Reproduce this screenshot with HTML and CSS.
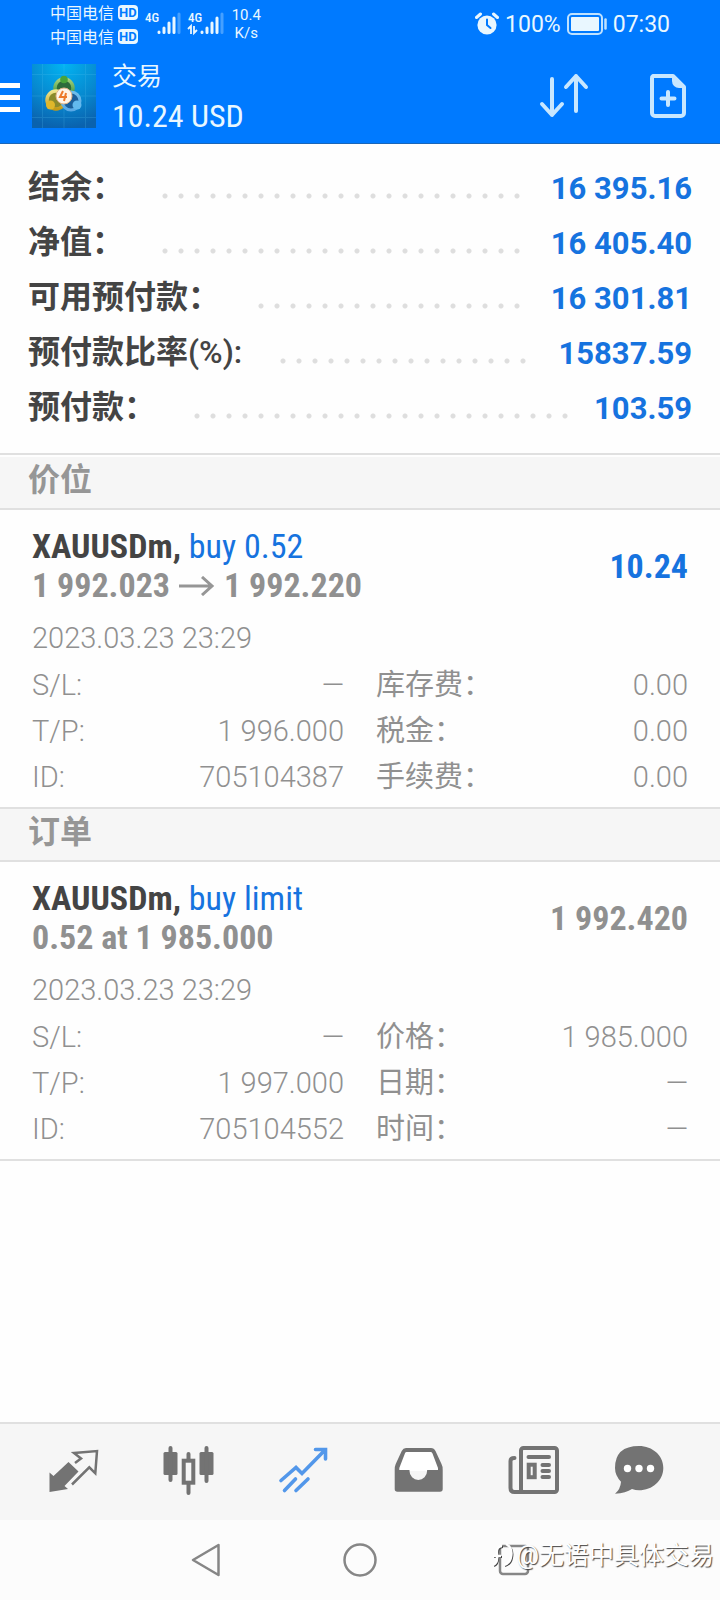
FILE: index.html
```html
<!DOCTYPE html>
<html lang="zh-CN">
<head>
<meta charset="utf-8">
<meta name="viewport" content="width=device-width, initial-scale=1">
<title>交易</title>
<link rel="stylesheet" href="styles.css">
</head>
<body>
<div class="app">
  <header class="header">
    <div class="status">
      <div class="carriers">
        <div class="carrier">中国电信 <span class="hd">HD</span></div>
        <div class="carrier">中国电信 <span class="hd">HD</span></div>
      </div>
      <svg class="signals" viewBox="0 0 80 28" aria-hidden="true">
        <g class="signal-text"><text x="0" y="12">4G</text><text x="43" y="12">4G</text></g>
        <g stroke="#e9f7ff" stroke-width="3" stroke-linecap="round">
          <path d="M14 22.500V22M19 22.500V18M24 22.500V13M29 22.500V8M57 22.500V22M62 22.500V18M67 22.500V13M72 22.500V8"/>
          <path d="M34 22.500V4M77 22.500V4" opacity=".3"/>
        </g>
        <path d="M46 24V16l-3 3M49 16v7l3-3" fill="none" stroke="#e9f7ff" stroke-width="1.800"/>
      </svg>
      <div class="speed"><span>10.4</span><span>K/s</span></div>
      <div class="status-right">
        <svg width="24" height="24" viewBox="0 0 24 24" aria-hidden="true">
          <circle cx="12" cy="13" r="9.600" fill="#e9f7ff"/>
          <path d="M1.500 5.500L5.500 2M22.500 5.500L18.500 2" stroke="#e9f7ff" stroke-width="3" stroke-linecap="round"/>
          <path d="M12 7.500V13l3.500 3" fill="none" stroke="#007aff" stroke-width="2" stroke-linecap="round"/>
        </svg>
        <span>100%</span>
        <svg width="40" height="22" viewBox="0 0 40 22" aria-hidden="true">
          <rect x="1" y="1" width="34" height="20" rx="4" fill="none" stroke="#bfe2ff" stroke-width="2"/>
          <rect x="4" y="4" width="28" height="14" rx="1" fill="#e9f7ff"/>
          <path d="M38.500 6.500v9" stroke="#bfe2ff" stroke-width="2.500" stroke-linecap="round"/>
        </svg>
        <span>07:30</span>
      </div>
    </div>
    <div class="toolbar">
      <button class="icon-btn" aria-label="菜单">
        <svg width="20" height="64" viewBox="0 0 20 64"><path d="M0 21.500h20M0 33.500h20M0 45.500h20" stroke="#fff" stroke-width="5"/></svg>
      </button>
      <svg class="logo" viewBox="0 0 64 64" aria-hidden="true">
        <defs>
          <radialGradient id="bg" cx=".5" cy="0" r="1"><stop offset="0" stop-color="#02b4f2"/><stop offset=".6" stop-color="#0787ce"/><stop offset="1" stop-color="#0a62ae"/></radialGradient>
          <linearGradient id="gr" x1="0" y1="0" x2="0" y2="1"><stop offset="0" stop-color="#a5d07a"/><stop offset="1" stop-color="#2c8c3c"/></linearGradient>
          <linearGradient id="ye" x1="0" y1="0" x2="0" y2="1"><stop offset="0" stop-color="#efe58e"/><stop offset="1" stop-color="#c39a17"/></linearGradient>
          <linearGradient id="bl" x1="0" y1="0" x2="0" y2="1"><stop offset="0" stop-color="#6fbdea"/><stop offset="1" stop-color="#5aa9e6"/></linearGradient>
        </defs>
        <rect width="64" height="64" fill="url(#bg)"/>
        <path d="M10.500 0v64M53.500 0v64M0 10.500h64M0 53.500h64M32 0v64M0 32h64" stroke="#5cc6f2" stroke-width="1" opacity=".2"/>
        <circle cx="32" cy="24" r="9" fill="#2d6c3c" stroke="url(#gr)" stroke-width="3.500"/>
        <circle cx="24" cy="36" r="9" fill="#8a8a2c" stroke="url(#ye)" stroke-width="3.500"/>
        <circle cx="39" cy="37" r="9" fill="#1b5f9c" stroke="url(#bl)" stroke-width="3"/>
        <circle cx="32" cy="15.500" r="3.800" fill="#47a33b"/>
        <circle cx="18.500" cy="41" r="4.500" fill="#dfb72a"/>
        <circle cx="45" cy="41" r="4.500" fill="#63b9ee"/>
        <circle cx="32" cy="32" r="8" fill="#fff4e8" stroke="#e2b58a" stroke-width="1"/>
        <path d="M31 27l-3 6h7M34 29l-2 8" fill="none" stroke="#ed7a2b" stroke-width="2"/>
      </svg>
      <div class="titles">
        <h1 class="title">交易</h1>
        <div class="profit">10.24 USD</div>
      </div>
      <button class="icon-btn sort" aria-label="排序">
        <svg width="52" height="48" viewBox="0 0 52 48" fill="none" stroke="#c8e7ff" stroke-width="4" stroke-linecap="round" stroke-linejoin="round"><path d="M14 7v36M4 32l10 11 10-11M38 39V4M28 15L38 4l10 11"/></svg>
      </button>
      <button class="icon-btn" aria-label="新订单">
        <svg width="40" height="48" viewBox="0 0 40 48"><path d="M5 4h20l11 11v26a3 3 0 0 1-3 3H7a3 3 0 0 1-3-3V6a2 2 0 0 1 1-2z" fill="none" stroke="#c8e7ff" stroke-width="4" stroke-linejoin="round"/><path d="M24 4v5a7 7 0 0 0 7 7h5z" fill="#c8e7ff"/><path d="M20 20v13M13.500 26.500h13" stroke="#c8e7ff" stroke-width="4" stroke-linecap="round"/></svg>
      </button>
    </div>
  </header>

  <main>
    <dl class="summary">
      <div class="sum-row"><dt>结余：</dt><dd>16 395.16</dd></div>
      <div class="sum-row"><dt>净值：</dt><dd>16 405.40</dd></div>
      <div class="sum-row"><dt>可用预付款：</dt><dd>16 301.81</dd></div>
      <div class="sum-row"><dt>预付款比率<span class="latin">(%):</span></dt><dd>15837.59</dd></div>
      <div class="sum-row"><dt>预付款：</dt><dd>103.59</dd></div>
    </dl>

    <h2 class="section">价位</h2>
    <article class="deal">
      <div class="deal-head">
        <div>
          <div class="symbol"><b>XAUUSDm,</b> <span class="side">buy 0.52</span></div>
          <div class="prices">1 992.023 <svg width="36" height="20" viewBox="0 0 36 20" role="img" aria-label="→"><path d="M0 10h33M23 1l10 9-10 9" fill="none" stroke="#969696" stroke-width="3"/></svg> 1 992.220</div>
        </div>
        <div class="amount gain">10.24</div>
      </div>
      <div class="date">2023.03.23 23:29</div>
      <dl class="details">
        <div><dt>S/L:</dt><dd>—</dd></div>
        <div><dt>库存费：</dt><dd>0.00</dd></div>
        <div><dt>T/P:</dt><dd>1 996.000</dd></div>
        <div><dt>税金：</dt><dd>0.00</dd></div>
        <div><dt>ID:</dt><dd>705104387</dd></div>
        <div><dt>手续费：</dt><dd>0.00</dd></div>
      </dl>
    </article>

    <h2 class="section">订单</h2>
    <article class="deal">
      <div class="deal-head">
        <div>
          <div class="symbol"><b>XAUUSDm,</b> <span class="side">buy limit</span></div>
          <div class="prices">0.52 at 1 985.000</div>
        </div>
        <div class="amount">1 992.420</div>
      </div>
      <div class="date">2023.03.23 23:29</div>
      <dl class="details">
        <div><dt>S/L:</dt><dd>—</dd></div>
        <div><dt>价格：</dt><dd>1 985.000</dd></div>
        <div><dt>T/P:</dt><dd>1 997.000</dd></div>
        <div><dt>日期：</dt><dd>—</dd></div>
        <div><dt>ID:</dt><dd>705104552</dd></div>
        <div><dt>时间：</dt><dd>—</dd></div>
      </dl>
    </article>
  </main>

  <nav class="tabs">
    <button class="icon-btn" aria-label="行情"><svg width="56" height="56" viewBox="0 0 56 56"><path d="M4.500 30.500L8.500 34 23.500 20l10 9.500-14 14.500 3.500 3-18.500 3z" fill="#737373"/><path d="M30 21l6-4.500-7-5.500 23-2-1.700 22.300-6-6L27 42.500" fill="none" stroke="#737373" stroke-width="2.500"/></svg></button>
    <button class="icon-btn" aria-label="图表"><svg width="56" height="56" viewBox="0 0 56 56"><g fill="#737373"><rect x="3.500" y="10" width="14" height="23" rx="1.500"/><rect x="39.500" y="10" width="14" height="23" rx="1.500"/></g><path d="M10.500 6v32M46.500 6v33M28.500 12v6M28.500 42v9" stroke="#737373" stroke-width="4" stroke-linecap="round"/><rect x="23.700" y="18.700" width="9.600" height="22" fill="none" stroke="#737373" stroke-width="4"/></svg></button>
    <button class="icon-btn" aria-label="交易"><svg width="56" height="56" viewBox="0 0 56 56" fill="none" stroke="#5297ea" stroke-width="3.600" stroke-linecap="round"><path d="M6 38.500l15-13 6 6L50 8M40.500 7.500h10V17M20.500 37L9.500 48.500M33 37L21 48.500"/></svg></button>
    <button class="icon-btn" aria-label="历史"><svg width="56" height="56" viewBox="0 0 56 56"><path fill="#fff" d="M15 9h27l7 20H8z"/><path fill="#737373" fill-rule="evenodd" d="M16 6h25q3 0 4.500 3l6 13q1.200 2 1.200 6v19q0 2.700-2.700 2.700H7.400q-2.700 0-2.700-2.700V28q0-4 1-6l6-13q1.500-3 4.300-3zM16.500 10q-1 0-1.500 1.300L9.300 26v2h10.200v1a8.800 9 0 0 0 17.600 0v-1H48v-2l-5.500-14.500Q42 10 41 10z"/></svg></button>
    <button class="icon-btn" aria-label="新闻"><svg width="56" height="56" viewBox="0 0 56 56" fill="none" stroke="#737373" stroke-width="4" stroke-linecap="round"><rect x="16" y="6" width="36" height="44" rx="2.500"/><path d="M9.500 16q-4 0-4 3v27q0 4 4 4H18M23.500 15h20.500M37.500 23h6.500M37.500 29h6.500M37.500 35h6.500"/><rect x="23.700" y="22.700" width="6" height="12.500"/></svg></button>
    <button class="icon-btn" aria-label="消息"><svg width="56" height="56" viewBox="0 0 56 56"><path fill="#737373" d="M28 4c13.500 0 24.300 9.500 24.300 22S41.500 48.300 28 48.300q-3.500 0-7-1.300-6 4.200-17 4.700 5.500-4.500 6-12Q4 33.500 4 26 4 4 28 4z"/><g fill="#fff"><circle cx="16.500" cy="26.500" r="3.700"/><circle cx="28" cy="26.500" r="3.700"/><circle cx="39.500" cy="26.500" r="3.700"/></g></svg></button>
  </nav>

  <footer class="sysnav">
    <button class="icon-btn" aria-label="返回"><svg width="36" height="36" viewBox="0 0 36 36" fill="none" stroke="#868686" stroke-width="2.500" stroke-linejoin="round"><path d="M5 18L30.500 3v30z"/></svg></button>
    <button class="icon-btn" aria-label="主页"><svg width="36" height="36" viewBox="0 0 36 36" fill="none" stroke="#868686" stroke-width="2.500"><circle cx="18" cy="18" r="15.500"/></svg></button>
    <button class="icon-btn" aria-label="最近任务"><svg width="36" height="36" viewBox="0 0 36 36" fill="none" stroke="#868686" stroke-width="2.500"><rect x="4" y="4" width="28" height="28" rx="3"/></svg></button>
    <div class="watermark">
      <svg width="24" height="28" viewBox="0 0 24 28" fill="none" aria-hidden="true"><path d="M1 15h8M10 5Q4 5 5 14q1 8-4 10M14 3q7 4 5 13-1 6-7 8" stroke="#444" stroke-width="2"/><path d="M0 14h8M9 4Q3 4 4 13q1 8-4 10M13 2q7 4 5 13-1 6-7 8" stroke="#fff" stroke-width="2.500"/></svg>
      <span>@无语中具体交易</span>
    </div>
  </footer>
</div>
</body>
</html>
```

FILE: styles.css
```css
* { box-sizing: border-box; }

body {
  margin: 0;
  background: #fefefe;
  color: #444;
  font-family: Roboto, "Noto Sans CJK SC", sans-serif;
}

h1, h2, dl, dd { margin: 0; }
svg { display: block; flex: none; }

.app {
  display: flex;
  flex-direction: column;
  min-height: 100vh;
}

.icon-btn {
  display: flex;
  align-items: center;
  justify-content: center;
  padding: 0;
  border: 0;
  background: none;
}

/* Header */
.header {
  height: 144px;
  background: #007aff;
  border-bottom: 1px solid #1a66b8;
  color: #e9f7ff;
}

.status {
  display: flex;
  align-items: center;
  height: 48px;
  padding: 0 50px;
}

.carrier {
  display: flex;
  align-items: center;
  gap: 4px;
  height: 24px;
  font-size: 16px;
}

.hd {
  padding: 0 1px;
  border-radius: 4px;
  background: #e9f7ff;
  color: #007aff;
  font-size: 13px;
  font-weight: 700;
  line-height: 15px;
}

.signals {
  width: 80px;
  height: 28px;
  margin-left: 7px;
}

.signal-text {
  fill: #e9f7ff;
  font-family: "Roboto Condensed", "Liberation Sans Narrow", Roboto, sans-serif;
  font-size: 13px;
  font-weight: 500;
}

.speed {
  display: flex;
  flex-direction: column;
  align-items: center;
  margin-left: 7px;
  font-size: 15px;
  line-height: 18px;
}

.status-right {
  display: flex;
  align-items: center;
  gap: 6px;
  margin-left: auto;
  font-size: 23px;
}

.toolbar {
  display: flex;
  align-items: center;
  height: 94px;
  padding: 2px 32px 0 0;
}

.logo {
  width: 64px;
  height: 64px;
  margin: 0 16px 0 12px;
}

.titles { flex: 1; }

.title {
  font-size: 25px;
  font-weight: 400;
  line-height: 40px;
}

.profit {
  font-family: "Roboto Condensed", "Liberation Sans Narrow", Roboto, sans-serif;
  font-size: 32px;
  line-height: 38px;
}

.sort { margin-right: 58px; }

/* Account summary */
.summary {
  margin-bottom: 2px;
  padding: 17px 28px;
  border-bottom: 2px solid #e0e0e0;
}

.sum-row {
  display: flex;
  align-items: center;
  height: 55px;
}

.sum-row dt {
  padding-bottom: 4px;
  font-size: 32px;
  font-weight: 700;
  line-height: 48px;
}

.latin { font-weight: 500; }

.sum-row dd {
  display: flex;
  flex: 1;
  align-items: center;
  color: #1673df;
  font-size: 31px;
  font-weight: 700;
}

.sum-row dd::before {
  content: "";
  flex: 1;
  height: 16px;
  margin: 14px 24px 0 33px;
  background: radial-gradient(circle, #dedede 2px, transparent 3px) 0 0 / 16px 16px repeat-x;
}

/* Section headings */
.section {
  height: 53px;
  padding-left: 28px;
  border-bottom: 2px solid #e0e0e0;
  background: #f6f6f6;
  color: #969696;
  font-size: 32px;
  font-weight: 700;
  line-height: 46px;
}

/* Positions and orders */
.deal {
  padding: 17px 32px 7px;
  border-bottom: 2px solid #e0e0e0;
  color: #909090;
}

.deal-head {
  display: flex;
  align-items: center;
  justify-content: space-between;
  font-family: "Roboto Condensed", "Liberation Sans Narrow", Roboto, sans-serif;
  font-size: 34px;
  line-height: 39px;
}

.symbol b { color: #444; }
.side { color: #1673df; }

.prices {
  display: flex;
  align-items: center;
  gap: 9px;
  font-weight: 700;
}

.amount { font-weight: 700; }
.gain { color: #1673df; }

.date {
  margin-top: 10px;
  font-size: 29px;
  font-weight: 300;
  line-height: 47px;
}

.details {
  display: grid;
  grid-template-columns: 1fr 1fr;
  column-gap: 32px;
  font-size: 29px;
  font-weight: 300;
  line-height: 46px;
}

.details div {
  display: flex;
  justify-content: space-between;
}

.details div:nth-child(even) dt { font-weight: 400; }

/* Bottom bars */
.tabs {
  display: grid;
  grid-template-columns: repeat(5, 115fr) 97fr;
  height: 98px;
  margin-top: auto;
  padding: 0 33px 4px 15px;
  border-top: 2px solid #e0e0e0;
  background: #f6f6f6;
}

.sysnav {
  position: relative;
  display: grid;
  grid-template-columns: repeat(3, 1fr);
  height: 80px;
  padding: 0 18%;
  background: #fcfcfc;
}

.watermark {
  position: absolute;
  right: 6px;
  bottom: 26px;
  display: flex;
  align-items: center;
  color: #fff;
  font-size: 25px;
  line-height: 36px;
  text-shadow: 1px 1px 1px #444;
}
```
